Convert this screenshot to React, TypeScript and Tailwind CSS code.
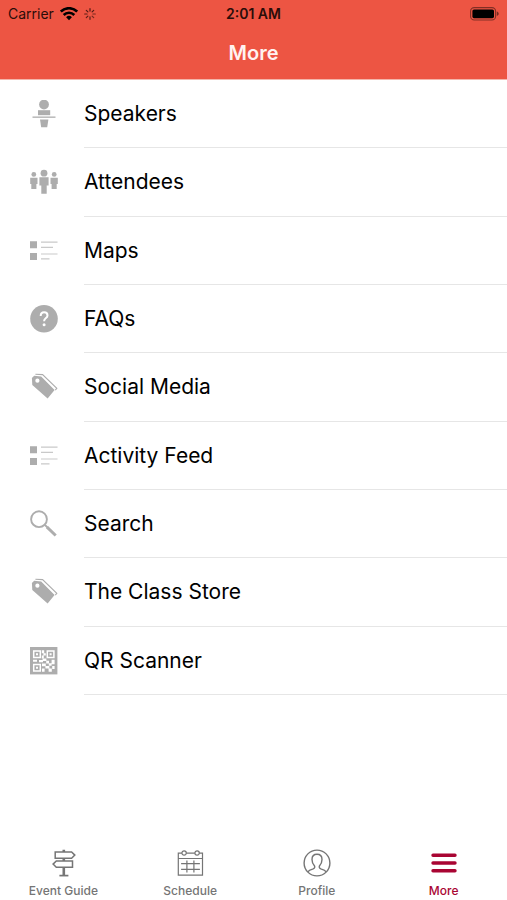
import React from "react";

function SpeakerIcon() {
  return (
    <svg viewBox="0 0 28 28" className="size-7" fill="currentColor" aria-hidden="true">
      <circle cx="14" cy="4.5" r="4.9" />
      <path d="M8 10.2h12.2v5H8z" />
      <path d="M2.5 16.5h23v1.3h-23z" />
      <path d="M10 19.4h8.4l-1.2 7.8h-6z" />
    </svg>
  );
}

function AttendeesIcon() {
  return (
    <svg viewBox="0 0 28 28" className="size-7" fill="currentColor" aria-hidden="true">
      <circle cx="14" cy="5.2" r="3.4" />
      <path d="M9.4 9.2h9.2v8.2h-1.9v8.3h-5.4v-8.3H9.4z" />
      <circle cx="3.8" cy="6.4" r="2.4" />
      <path d="M.2 9.8h7.3v6.2H6.4v5H1.3v-5H.2z" />
      <circle cx="24.2" cy="6.4" r="2.4" />
      <path d="M20.5 9.8h7.3v6.2h-1.1v5h-5.1v-5h-1.1z" />
    </svg>
  );
}

function ListIcon() {
  return (
    <svg viewBox="0 0 28 28" className="size-7" fill="currentColor" aria-hidden="true">
      <path d="M0 4.2h7v7H0zM0 16h7v7H0z" />
      <path
        d="M11 5.2h16.5M11 10.4h12M11 17h16.5M11 21.9h8.5"
        stroke="currentColor"
        strokeWidth="1.2"
        opacity="0.65"
      />
    </svg>
  );
}

function QuestionIcon() {
  return (
    <svg viewBox="0 0 28 28" className="size-7" fill="none" aria-hidden="true">
      <circle cx="14" cy="13.8" r="13.8" fill="currentColor" />
      <path
        d="M10.7 10.9c0-2.3 1.3-3.6 3.4-3.6 2 0 3.4 1.2 3.4 3.1 0 1.4-.7 2.1-1.8 2.9-1.1.8-1.6 1.4-1.6 2.9"
        stroke="white"
        strokeWidth="2"
      />
      <circle cx="14.1" cy="19.8" r="1.5" fill="white" />
    </svg>
  );
}

function TagsIcon() {
  return (
    <svg viewBox="0 0 28 28" className="size-7" fill="none" aria-hidden="true">
      <path
        fillRule="evenodd"
        d="M1.9 5 4.2 2.8l7 .6 13.4 13.6-7 8.6L2.3 12zM7.4 5.6a2.1 2.1 0 1 0 0 4.2 2.1 2.1 0 0 0 0-4.2z"
        fill="currentColor"
      />
      <path d="M5.4 1.2l7.2.4 14.2 13.8-1.5 1.8" stroke="currentColor" strokeWidth="1.1" />
    </svg>
  );
}

function SearchIcon() {
  return (
    <svg viewBox="0 0 28 28" className="size-7" fill="none" stroke="currentColor" aria-hidden="true">
      <circle cx="9" cy="9.2" r="7.9" strokeWidth="1.9" />
      <path d="M15 15l3 3" strokeWidth="1.8" />
      <path d="M17 17.2l8.7 8.3" strokeWidth="3" />
    </svg>
  );
}

function QrIcon() {
  return (
    <svg viewBox="0 0 28 28" className="size-7" aria-hidden="true">
      <path d="M0 0h27.4v27.4H0z" fill="currentColor" />
      <g fill="none" stroke="white" strokeWidth="1.5">
        <path d="M3.7 4h6.6v6.4H3.7zM17.3 4h6.6v6.4h-6.6zM3.7 17.6h6.6V24H3.7z" />
      </g>
      <g fill="white">
        <path d="M6 6.2h2v2H6zM19.6 6.2h2v2h-2zM6 19.8h2v2H6z" />
        <path d="M11.8 3.2h2.4v3h-2.4zM13.4 6.2h2.4v2.4h-2.4zM11.8 8.6h2v3h-2zM3 12.8h4v2H3zM9 13h4v2.2H9z" />
        <path d="M12.6 11.6h3.8V14h-3.8zM16.2 13.8H19v2.6h-2.8zM21.6 12.8h3v4.4h-3zM18.8 16.2h2.8v2.6h-2.8zM12 16.6h3.8v2.6H12zM15.4 19h4v2.6h-4zM22.2 19h2.4v3h-2.4zM12 21.6h2.6v3.2H12zM18.6 21.6h3.2v3.2h-3.2z" />
      </g>
    </svg>
  );
}

function SignpostIcon() {
  return (
    <svg viewBox="0 0 28 28" className="size-7" fill="none" stroke="currentColor" strokeWidth="1.5" aria-hidden="true">
      <path d="M6.2 3h16.4l3.2 3.1-3.2 3.1H6.2zM23.5 12H7.3l-3.2 3.1 3.2 3.1h16.2z" />
      <path d="M14.8 .8V3M14.8 9.2V12M14.8 18.2v8" strokeWidth="2.6" />
      <path d="M10.4 26.6h9" strokeWidth="1.7" />
    </svg>
  );
}

function CalendarIcon() {
  return (
    <svg viewBox="0 0 28 28" className="size-7" fill="none" stroke="currentColor" strokeWidth="1.2" aria-hidden="true">
      <path d="M5.9 4.2H2.3v22h24.2v-22h-3.2M10.3 4.2h8.6M2.3 9.5h24.2" />
      <circle cx="8.1" cy="4" r="2.2" />
      <circle cx="21.1" cy="4" r="2.2" />
      <path d="M5.1 14.6h18.8M5.1 20.3h18.8M10.9 11.6v11.8M17.9 11.6v11.8" />
    </svg>
  );
}

function ProfileIcon() {
  return (
    <svg viewBox="0 0 28 28" className="size-7" fill="none" stroke="currentColor" strokeWidth="1.4" aria-hidden="true">
      <circle cx="14" cy="14" r="12.9" />
      <path d="M4.8 22.8c1-1.5 3-2.2 5.4-3 1.6-.6 1.9-1.8 1.2-3.1-1.4-1.6-2.4-3.5-2.4-6.3 0-3.3 2-5.2 5-5.2s5 1.9 5 5.2c0 2.8-1 4.7-2.4 6.3-.7 1.3-.4 2.5 1.2 3.1 2.4.8 4.4 1.5 5.4 3" />
    </svg>
  );
}

function MenuIcon() {
  return (
    <svg viewBox="0 0 28 28" className="size-7" stroke="currentColor" strokeWidth="3.4" strokeLinecap="round" aria-hidden="true">
      <path d="M3 6.2h22M3 14h22M3 21.8h22" />
    </svg>
  );
}

function WifiIcon() {
  return (
    <svg viewBox="0 0 18 14" className="h-3.5 w-[18px]" fill="none" stroke="currentColor" strokeWidth="2.6" aria-hidden="true">
      <path d="M.8 4.6a11.6 11.6 0 0 1 16.4 0M3.7 8a7.5 7.5 0 0 1 10.6 0" />
      <path d="M9 13.2 6.1 10.3a4.1 4.1 0 0 1 5.8 0z" fill="currentColor" stroke="none" />
    </svg>
  );
}

function SpinnerIcon() {
  return (
    <svg viewBox="0 0 12 12" className="size-3" stroke="currentColor" strokeWidth="1.2" strokeLinecap="round" aria-hidden="true">
      <path d="M6 .7v2.4M9.7 2.3 8.1 3.9M2.3 2.3l1.6 1.6" opacity="0.8" />
      <path d="M11.3 6H8.9M9.7 9.7 8.1 8.1" opacity="0.6" />
      <path d="M6 11.3V8.9M2.3 9.7l1.6-1.6M.7 6h2.4" opacity="0.75" />
    </svg>
  );
}

function BatteryIcon() {
  return (
    <svg viewBox="0 0 30 14" className="h-3.5 w-[30px]" aria-hidden="true">
      <rect x="1.6" y="0.6" width="25" height="12.4" rx="3.6" fill="none" stroke="black" strokeWidth="1.1" opacity="0.45" />
      <rect x="3.4" y="2.4" width="21.6" height="8.8" rx="1.6" fill="black" />
      <path d="M27.8 4.6c1.3.4 1.9 1.2 1.9 2.2s-.6 1.8-1.9 2.2z" opacity="0.5" />
    </svg>
  );
}

const items = [
  { label: "Speakers", icon: SpeakerIcon },
  { label: "Attendees", icon: AttendeesIcon },
  { label: "Maps", icon: ListIcon },
  { label: "FAQs", icon: QuestionIcon },
  { label: "Social Media", icon: TagsIcon },
  { label: "Activity Feed", icon: ListIcon },
  { label: "Search", icon: SearchIcon },
  { label: "The Class Store", icon: TagsIcon },
  { label: "QR Scanner", icon: QrIcon },
];

const tabs = [
  { label: "Event Guide", icon: SignpostIcon },
  { label: "Schedule", icon: CalendarIcon },
  { label: "Profile", icon: ProfileIcon },
  { label: "More", icon: MenuIcon, active: true },
];

export default function App() {
  return (
    <div className="flex min-h-screen flex-col bg-white font-['Inter','Liberation_Sans',sans-serif] text-black">
      <header className="border-b border-[#f4b5aa] bg-[#ed5543]">
        {/* Status bar */}
        <div className="grid h-7 grid-cols-3 items-center px-2 text-sm text-[#2a0d09]">
          <div className="flex items-center gap-1.5">
            <span>Carrier</span>
            <span className="text-black">
              <WifiIcon />
            </span>
            <SpinnerIcon />
          </div>
          <span className="text-center font-semibold">2:01 AM</span>
          <div className="flex justify-end">
            <BatteryIcon />
          </div>
        </div>
        <h1 className="pt-[11px] pb-3 text-center text-xl/7 font-semibold text-[#fff3f0]">More</h1>
      </header>

      <main className="flex-1">
        <ul className="grid min-h-[615px] auto-rows-fr">
          {items.map(({ label, icon: Icon }) => (
            <li key={label}>
              <a href="#" className="flex h-full items-center pl-[30px] text-[#adadad]">
                <Icon />
                <span className="ml-[26px] flex h-full flex-1 items-center border-b border-[#e6e6e6] text-[21px] text-black">
                  {label}
                </span>
              </a>
            </li>
          ))}
        </ul>
      </main>

      <nav className="grid grid-cols-4 pb-px">
        {tabs.map(({ label, icon: Icon, active }) => (
          <button
            key={label}
            type="button"
            className={`flex flex-col items-center gap-1.5 text-xs font-medium ${
              active ? "text-[#a90533]" : "text-[#757575]"
            }`}
          >
            <Icon />
            <span>{label}</span>
          </button>
        ))}
      </nav>
    </div>
  );
}
